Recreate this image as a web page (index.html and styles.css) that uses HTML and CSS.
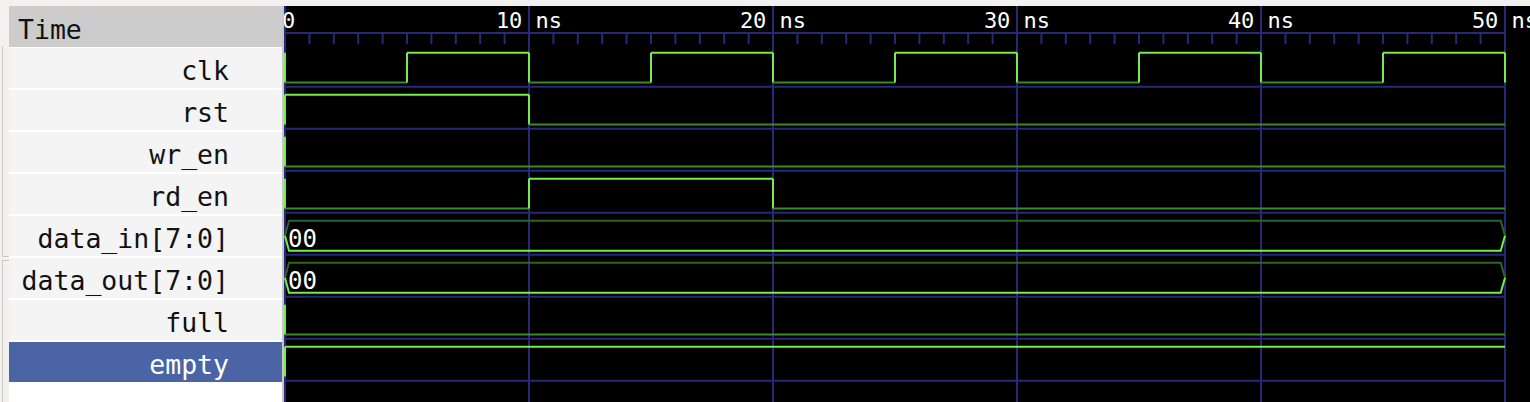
FILE: index.html
```html
<!DOCTYPE html>
<html>
<head>
    <title>Waveform Viewer</title>
    <link rel="stylesheet" href="styles.css">
</head>
<body>
    <div class="viewer">
        <div class="gutter">
            <div class="gutter-pane"></div>
            <div class="gutter-pane lower"></div>
        </div>

        <div class="names">
            <div class="names-header">Time</div>
            <div class="name-row">clk</div>
            <div class="name-row">rst</div>
            <div class="name-row">wr_en</div>
            <div class="name-row">rd_en</div>
            <div class="name-row">data_in[7:0]</div>
            <div class="name-row">data_out[7:0]</div>
            <div class="name-row">full</div>
            <div class="name-row selected">empty</div>
        </div>

        <div class="splitter"></div>

        <div class="waves">
            <svg id="wave-svg" width="1246" height="396"></svg>
        </div>
    </div>

    <script>
        const SVG_NS = 'http://www.w3.org/2000/svg';
        const svg = document.getElementById('wave-svg');

        const X0 = 1;
        const PX_PER_NS = 24.4;
        const END_NS = 50;
        const ROW_TOP = 42;
        const ROW_PITCH = 42;

        const GRID = '#27287a';
        const HIGH = '#72ee4c';
        const LOW = '#3b8a2b';
        const BUS_TOP = '#2e6526';

        // bit signals: list of [time in ns, value]; bus signals: list of [time, label]
        const signals = [
            { type: 'bit', changes: [[0,0],[5,1],[10,0],[15,1],[20,0],[25,1],[30,0],[35,1],[40,0],[45,1],[50,0]] },
            { type: 'bit', changes: [[0,1],[10,0]] },
            { type: 'bit', changes: [[0,0]] },
            { type: 'bit', changes: [[0,0],[10,1],[20,0]] },
            { type: 'bus', changes: [[0,'00']] },
            { type: 'bus', changes: [[0,'00']] },
            { type: 'bit', changes: [[0,0]] },
            { type: 'bit', changes: [[0,1]] }
        ];

        function x(ns) {
            return X0 + ns * PX_PER_NS;
        }

        function add(tag, attrs, text) {
            const el = document.createElementNS(SVG_NS, tag);
            for (const key in attrs) {
                el.setAttribute(key, attrs[key]);
            }
            if (text) el.textContent = text;
            svg.appendChild(el);
            return el;
        }

        function line(x1, y1, x2, y2, color) {
            add('line', { x1, y1, x2, y2, stroke: color, 'stroke-width': 2 });
        }

        function drawRuler() {
            line(x(0), 27, x(END_NS), 27, GRID);
            for (let ns = 0; ns <= END_NS; ns++) {
                if (ns % 10 === 0) {
                    line(x(ns), 0, x(ns), 396, GRID);
                } else {
                    line(x(ns), 27, x(ns), 38, GRID);
                }
            }
            add('text', { x: -2, y: 22, class: 'time-label' }, '0');
            for (let ns = 10; ns <= END_NS; ns += 10) {
                add('text', { x: x(ns), y: 22, class: 'time-label', 'text-anchor': 'middle' }, ns + ' ns');
            }
        }

        function drawBit(changes, hi, lo) {
            changes.forEach(([t, value], i) => {
                const next = i + 1 < changes.length ? changes[i + 1][0] : END_NS;
                line(x(t), hi, x(t), lo, HIGH);
                if (next > t) {
                    const y = value ? hi : lo;
                    line(x(t), y, x(next), y, value ? HIGH : LOW);
                }
            });
        }

        function drawBus(changes, top, bottom, base) {
            const mid = (top + bottom) / 2;
            changes.forEach(([t, label], i) => {
                const next = i + 1 < changes.length ? changes[i + 1][0] : END_NS;
                const a = x(t), b = x(next);
                add('polyline', { points: `${a},${mid} ${a + 4},${top} ${b - 4.3},${top} ${b},${mid}`,
                    fill: 'none', stroke: BUS_TOP, 'stroke-width': 2 });
                add('polyline', { points: `${a},${mid} ${a + 4},${bottom} ${b - 4.3},${bottom} ${b},${mid}`,
                    fill: 'none', stroke: HIGH, 'stroke-width': 2 });
                add('text', { x: a + 3, y: base + 30.5, class: 'bus-label' }, label);
            });
        }

        function drawSignals() {
            signals.forEach((signal, i) => {
                const base = ROW_TOP + i * ROW_PITCH;
                line(0, base + 38.7, x(END_NS), base + 38.7, GRID);
            });
            signals.forEach((signal, i) => {
                const base = ROW_TOP + i * ROW_PITCH;
                if (signal.type === 'bit') {
                    drawBit(signal.changes, base + 4.7, base + 34.5);
                } else {
                    drawBus(signal.changes, base + 4.7, base + 34.7, base);
                }
            });
        }

        drawRuler();
        drawSignals();
    </script>
</body>
</html>
```

FILE: styles.css
```css
body {
    margin: 0;
    padding-top: 6px;
    height: 402px;
    box-sizing: border-box;
    overflow: hidden;
    background-color: #f2f1f0;
    font-family: "DejaVu Sans Mono", "Liberation Mono", monospace;
}
.viewer {
    display: flex;
    height: 396px;
}
.gutter {
    width: 9px;
    flex: none;
    display: flex;
    flex-direction: column;
    padding-top: 40px;
    box-sizing: border-box;
}
.gutter-pane {
    height: 210px;
    margin-left: 2px;
    border-left: 1px solid #cfcac6;
    border-bottom: 1px solid #cfcac6;
}
.gutter-pane.lower {
    flex: 1;
    margin-top: 3px;
    border-top: 1px solid #cfcac6;
    border-bottom: none;
}
.names {
    width: 273px;
    flex: none;
    background-color: #ffffff;
    font-size: 26.5px;
    color: #111111;
}
.names-header {
    height: 41px;
    box-sizing: border-box;
    padding: 7px 0 0 9px;
    line-height: 34px;
    background-color: #cccccc;
    margin-bottom: 1px;
}
.name-row {
    height: 40px;
    box-sizing: border-box;
    padding: 6px 53px 0 0;
    line-height: 34px;
    text-align: right;
    background-color: #f4f4f4;
    margin-bottom: 2px;
    white-space: nowrap;
}
.name-row.selected {
    background-color: #4a64a5;
    color: #ffffff;
}
.splitter {
    width: 2px;
    flex: none;
    background-color: #c6c6c6;
}
.waves {
    flex: 1;
    background-color: #000000;
    overflow: hidden;
}
.waves svg {
    display: block;
}
.time-label {
    font-family: "DejaVu Sans Mono", "Liberation Mono", monospace;
    font-size: 22px;
    fill: #ffffff;
}
.bus-label {
    font-family: "DejaVu Sans Mono", "Liberation Mono", monospace;
    font-size: 24px;
    fill: #ffffff;
}
```
